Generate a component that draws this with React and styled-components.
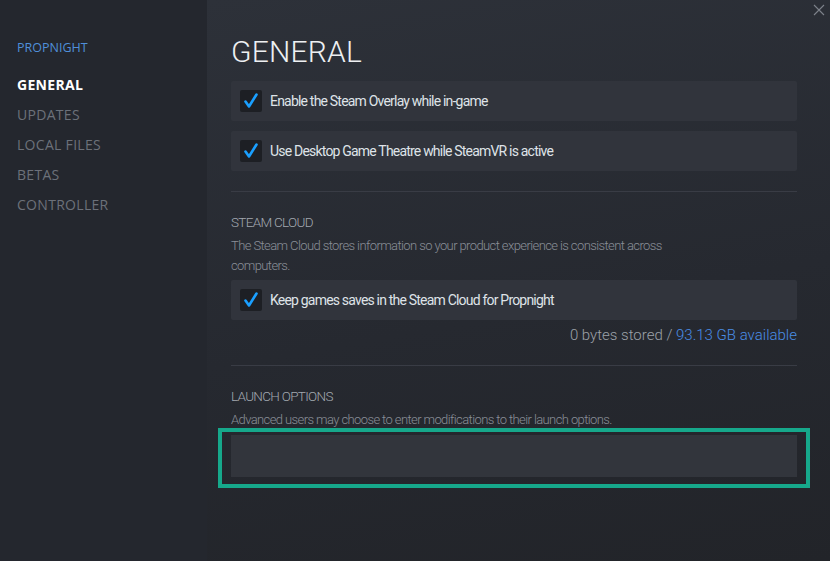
import React from 'react'
import styled, { createGlobalStyle } from 'styled-components'

const Global = createGlobalStyle`
  html, body { margin: 0; padding: 0; background: #23262d; }
  #root { width: 830px; height: 561px; }
`

const Frame = styled.div`
  width: 830px;
  height: 561px;
  display: flex;
  overflow: hidden;
  font-family: Roboto, "Liberation Sans", sans-serif;
`

const Sidebar = styled.nav`
  width: 207px;
  flex: none;
  background: #24272e;
  padding: 40px 0 0 17px;
  box-sizing: border-box;
  display: flex;
  flex-direction: column;
  font-family: "Open Sans", sans-serif;
`

const GameName = styled.div`
  color: #4f8fd9;
  font-size: 12.5px;
  line-height: 16px;
  margin-bottom: 14px;
`

const NavItem = styled.div`
  font-size: 14px;
  line-height: 30px;
  color: ${p => (p.$active ? '#ffffff' : '#6c717a')};
  font-weight: ${p => (p.$active ? 700 : 400)};
  letter-spacing: 0.3px;
`

const Main = styled.main`
  flex: 1;
  position: relative;
  background: linear-gradient(170deg, #2d3139 0%, #262930 55%, #222429 100%);
  padding: 0 33px 0 24px;
  display: flex;
  flex-direction: column;
`

const Close = styled.button`
  position: absolute;
  top: 3px;
  right: 4px;
  width: 14px;
  height: 14px;
  padding: 0;
  border: none;
  background: none;
  color: #7d828b;
  display: flex;
`

const Title = styled.h1`
  margin: 34px 0 11px 0;
  font-weight: 300;
  font-size: 30px;
  line-height: 36px;
  letter-spacing: 0.2px;
  color: #eef0f2;
`

const Row = styled.label`
  height: 40px;
  background: #31343c;
  border-radius: 2px;
  display: flex;
  align-items: center;
  padding-left: 9px;
  gap: 8px;
  margin-top: ${p => p.$mt || 0}px;
  color: #dfe3e8;
  font-size: 14px;
  letter-spacing: -0.8px;
`

const Box = styled.span`
  width: 22px;
  height: 22px;
  background: #1d1f24;
  border-radius: 2px;
  display: flex;
  align-items: center;
  justify-content: center;
`

const Divider = styled.hr`
  border: none;
  height: 1px;
  background: #393c45;
  margin: ${p => p.$mt}px 0 0 0;
`

const SectionHead = styled.div`
  margin-top: ${p => p.$mt}px;
  font-size: 13.5px;
  line-height: 20px;
  color: #a3a8b0;
  font-weight: 300;
  letter-spacing: -0.7px;
`

const Desc = styled.p`
  margin: 4px 0 0 0;
  max-width: 450px;
  font-size: 13px;
  line-height: 20px;
  color: #8a8f98;
  font-weight: 300;
  letter-spacing: -0.6px;
`

const Storage = styled.div`
  margin-top: 5px;
  text-align: right;
  font-size: 15px;
  line-height: 20px;
  color: #9ca1a9;
  font-weight: 300;
`

const Link = styled.span`
  color: #4a8ee6;
`

const InputWrap = styled.div`
  position: relative;
  margin-top: 5px;

  &::after {
    content: '';
    position: absolute;
    left: -13px;
    right: -13px;
    top: -7px;
    bottom: -11px;
    border: 4px solid #16a88b;
    pointer-events: none;
  }
`

const Input = styled.input`
  display: block;
  width: 100%;
  height: 42px;
  box-sizing: border-box;
  border: none;
  outline: none;
  background: #32353c;
  color: #dfe3e8;
  padding: 0 10px;
`

const Check = () => (
  <svg width="16" height="16" viewBox="0 0 16 16">
    <path d="M2.5 8.5 L6 13.5 L13.5 1.5" fill="none" stroke="#1a9fff" strokeWidth="2.6" strokeLinecap="round" strokeLinejoin="round" />
  </svg>
)

const CheckRow = ({ label, mt }) => (
  <Row $mt={mt}>
    <Box><Check /></Box>
    {label}
  </Row>
)

const nav = ['GENERAL', 'UPDATES', 'LOCAL FILES', 'BETAS', 'CONTROLLER']

export default function App() {
  return (
    <Frame>
      <Global />
      <Sidebar>
        <GameName>PROPNIGHT</GameName>
        {nav.map((n, i) => (
          <NavItem key={n} $active={i === 0}>{n}</NavItem>
        ))}
      </Sidebar>
      <Main>
        <Close aria-label="close">
          <svg width="14" height="14" viewBox="0 0 14 14">
            <path d="M2 2 L12 12 M12 2 L2 12" stroke="currentColor" strokeWidth="1.1" />
          </svg>
        </Close>
        <Title>GENERAL</Title>
        <CheckRow label="Enable the Steam Overlay while in-game" />
        <CheckRow mt={10} label="Use Desktop Game Theatre while SteamVR is active" />
        <Divider $mt={20} />
        <SectionHead $mt={20}>STEAM CLOUD</SectionHead>
        <Desc>The Steam Cloud stores information so your product experience is consistent across computers.</Desc>
        <CheckRow mt={4} label="Keep games saves in the Steam Cloud for Propnight" />
        <Storage>0 bytes stored / <Link>93.13 GB available</Link></Storage>
        <Divider $mt={20} />
        <SectionHead $mt={20}>LAUNCH OPTIONS</SectionHead>
        <Desc>Advanced users may choose to enter modifications to their launch options.</Desc>
        <InputWrap>
          <Input type="text" />
        </InputWrap>
      </Main>
    </Frame>
  )
}
